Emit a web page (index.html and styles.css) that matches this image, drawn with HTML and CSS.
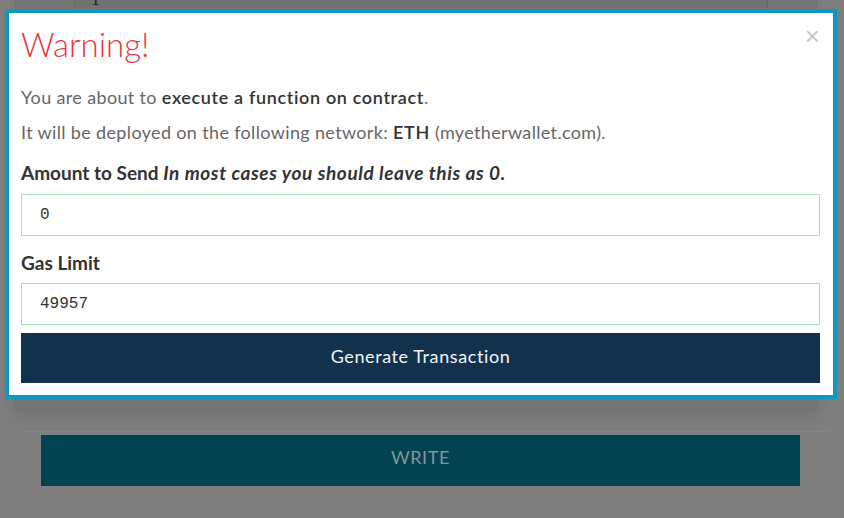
FILE: index.html
```html
<!DOCTYPE html>
<html>
<head>
<meta charset="utf-8">
<link rel="stylesheet" href="styles.css">
</head>
<body>
<div class="page">
  <div class="card">
    <div class="editor"><span class="lineno">1</span></div>
    <div class="side"></div>
  </div>
  <div class="write-wrap">
    <button class="write-btn">WRITE</button>
  </div>
</div>

<div class="modal">
  <div class="modal-body">
    <button class="close">&times;</button>
    <h2 class="title">Warning!</h2>
    <p class="text">You are about to <strong>execute a function on contract</strong>.</p>
    <p class="text">It will be deployed on the following network: <strong>ETH</strong> (myetherwallet.com).</p>
    <label class="label">Amount to Send <em>In most cases you should leave this as 0.</em></label>
    <div class="input">0</div>
    <label class="label">Gas Limit</label>
    <div class="input">49957</div>
    <button class="gen-btn">Generate Transaction</button>
  </div>
</div>
</body>
</html>
```

FILE: styles.css
```css
html, body {
  margin: 0;
  padding: 0;
}
body {
  width: 844px;
  height: 518px;
  overflow: hidden;
  background: #7f7f7f;
  font-family: Lato, "Noto Sans", sans-serif;
  position: relative;
}
.page {
  padding-left: 15px;
  width: 802px;
}
.card {
  height: 412px;
  background: #747474;
  box-shadow: 0 4px 18px rgba(0,0,0,0.12);
  display: flex;
  align-items: flex-start;
}
.editor {
  margin-left: 59px;
  width: 692px;
  height: 392px;
  border-left: 1px solid #55705d;
  border-right: 1px solid #55705d;
  background: #717171;
  overflow: hidden;
}
.lineno {
  display: block;
  margin-top: -11px;
  padding-left: 16px;
  font-family: "Liberation Serif", serif;
  font-size: 18px;
  color: #222;
}
.side {
  flex: 1;
}
.write-wrap {
  margin-top: 19px;
  padding-top: 3px;
  border-top: 1px dotted #8c8c8c;
  margin-left: 10px;
  width: 805px;
}
.write-btn {
  display: block;
  margin-left: 16px;
  width: 759px;
  height: 51px;
  border: 0;
  padding: 0 0 7px;
  background: #024352;
  color: #84959a;
  font-family: Lato, sans-serif;
  font-size: 18px;
  letter-spacing: 0.6px;
}

.modal {
  position: absolute;
  left: 5px;
  top: 9px;
  width: 824px;
  height: 382px;
  border: 4px solid #0e97c0;
  background: #fff;
}
.modal-body {
  position: relative;
  padding: 10px 13px 12px 12px;
}
.close {
  position: absolute;
  right: 13px;
  top: 10px;
  border: 0;
  background: none;
  padding: 0;
  font-family: "Liberation Sans", sans-serif;
  font-size: 26px;
  line-height: 26px;
  color: #c8c8c8;
}
.title {
  margin: 0;
  font-family: "Lato Light", Lato, sans-serif;
  font-size: 33px;
  line-height: 42px;
  font-weight: 300;
  color: #ef3340;
}
.text {
  margin: 20px 0 0;
  font-size: 18px;
  letter-spacing: 0.35px;
  line-height: 24px;
  color: #666;
}
.text + .text {
  margin-top: 11px;
}
.text strong {
  font-weight: 600;
  letter-spacing: 0.65px;
  color: #333;
}
.label {
  display: block;
  margin-top: 17px;
  font-size: 19px;
  line-height: 24px;
  font-weight: 700;
  color: #333;
}
.label em {
  letter-spacing: 0.6px;
}
.input + .label {
  margin-top: 15px;
}
.input {
  margin-top: 9px;
  height: 40px;
  border: 1px solid #a7e0bb;
  padding-left: 18px;
  font-family: "Liberation Mono", monospace;
  font-size: 16px;
  line-height: 40px;
  color: #333;
}
.input + .label + .input {
  margin-top: 8px;
}
.gen-btn {
  display: block;
  margin-top: 8px;
  width: 100%;
  height: 50px;
  border: 0;
  padding: 0 0 4px;
  background: #12314d;
  color: #f4f6f8;
  font-family: Lato, sans-serif;
  font-size: 18px;
  letter-spacing: 0.6px;
}
```
